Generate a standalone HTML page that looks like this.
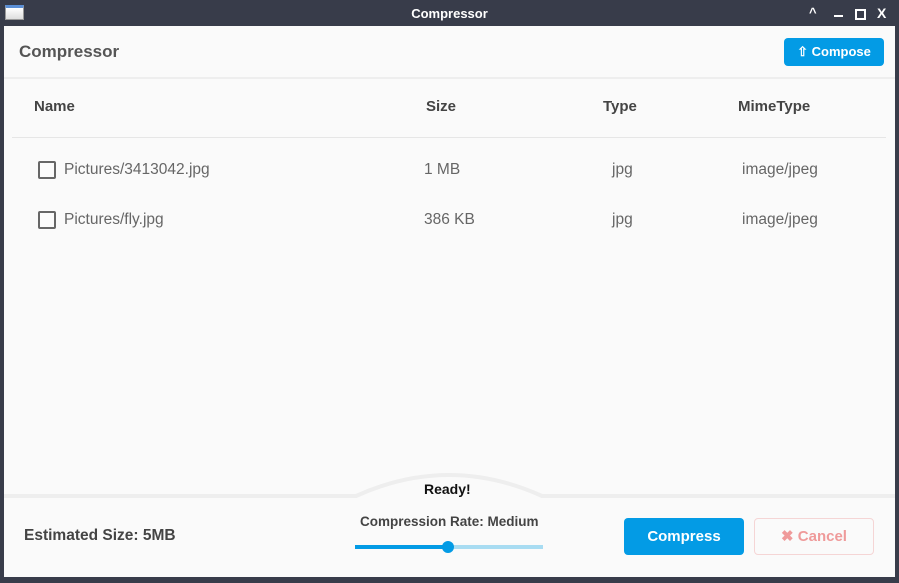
<!DOCTYPE html>
<html><head><meta charset="utf-8"><style>
body{margin:0;width:899px;height:583px;background:#383c4a;position:relative;overflow:hidden;font-family:"Liberation Sans",sans-serif;}
.win{position:absolute;left:4px;top:26px;width:891px;height:551px;background:#fafafa;}
.t{position:absolute;white-space:nowrap;}
.b{font-weight:bold;}
</style></head><body>
<div style="position:absolute;left:5px;top:5px;width:19px;height:15px;background:linear-gradient(#fff,#ddd);border:1px solid #999;box-sizing:border-box;border-top:3px solid #5b8fd6"></div>
<div class="t b" style="left:0;width:899px;text-align:center;top:6px;color:#fff;font-size:13px">Compressor</div>
<div class="t b" style="left:809px;top:5px;color:#fff;font-size:13px">^</div>
<div style="position:absolute;left:834px;top:15px;width:9px;height:2px;background:#fff"></div>
<div style="position:absolute;left:855px;top:9px;width:7px;height:7px;border:2px solid #fff"></div>
<div class="t b" style="left:877px;top:5px;color:#fff;font-size:14px">X</div>
<div class="win">
<div class="t b" style="left:15px;top:16px;font-size:17px;color:#555">Compressor</div>
<div style="position:absolute;left:780px;top:12px;width:100px;height:28px;background:#039be5;border-radius:4px;color:#fff;font-size:13px;font-weight:bold;line-height:28px;text-align:center">⇧ Compose</div>
<div style="position:absolute;left:0;top:51px;width:891px;height:2px;background:#eee"></div>
<div class="t b" style="left:30px;top:72px;font-size:15px;color:#444">Name</div>
<div class="t b" style="left:422px;top:72px;font-size:15px;color:#444">Size</div>
<div class="t b" style="left:599px;top:72px;font-size:15px;color:#444">Type</div>
<div class="t b" style="left:734px;top:72px;font-size:15px;color:#444">MimeType</div>
<div style="position:absolute;left:8px;top:111px;width:874px;height:1px;background:#e6e6e6"></div>
<div style="position:absolute;left:34px;top:135px;width:14px;height:14px;border:2px solid #666;border-radius:2px"></div>
<div class="t" style="left:60px;top:135px;font-size:15.5px;color:#666">Pictures/3413042.jpg</div>
<div class="t" style="left:420px;top:135px;font-size:15.5px;color:#666">1 MB</div>
<div class="t" style="left:608px;top:135px;font-size:15.5px;color:#666">jpg</div>
<div class="t" style="left:738px;top:135px;font-size:15.5px;color:#666">image/jpeg</div>
<div style="position:absolute;left:34px;top:185px;width:14px;height:14px;border:2px solid #666;border-radius:2px"></div>
<div class="t" style="left:60px;top:185px;font-size:15.5px;color:#666">Pictures/fly.jpg</div>
<div class="t" style="left:420px;top:185px;font-size:15.5px;color:#666">386 KB</div>
<div class="t" style="left:608px;top:185px;font-size:15.5px;color:#666">jpg</div>
<div class="t" style="left:738px;top:185px;font-size:15.5px;color:#666">image/jpeg</div>
<svg style="position:absolute;left:0;top:440px" width="891" height="35"><path d="M0 30 H352 Q445 -12 538 30 H891" stroke="#eee" stroke-width="4" fill="none"/></svg>
<div class="t b" style="left:420px;top:455px;font-size:14px;color:#111">Ready!</div>
<div class="t b" style="left:20px;top:501px;font-size:15.5px;color:#444">Estimated Size: 5MB</div>
<div class="t b" style="left:356px;top:488px;font-size:13.5px;color:#444">Compression Rate: Medium</div>
<div style="position:absolute;left:351px;top:519px;width:94px;height:4px;background:#039be5"></div>
<div style="position:absolute;left:445px;top:519px;width:94px;height:4px;background:#a8dcf2"></div>
<div style="position:absolute;left:438px;top:515px;width:12px;height:12px;border-radius:50%;background:#039be5"></div>
<div style="position:absolute;left:620px;top:492px;width:120px;height:37px;background:#039be5;border-radius:4px;color:#fff;font-size:15px;font-weight:bold;line-height:37px;text-align:center">Compress</div>
<div style="position:absolute;left:750px;top:492px;width:118px;height:35px;border:1px solid #f5d5d5;border-radius:4px;color:#ef9a9a;font-size:15px;font-weight:bold;line-height:35px;text-align:center">✖ Cancel</div>
</div>
</body></html>
